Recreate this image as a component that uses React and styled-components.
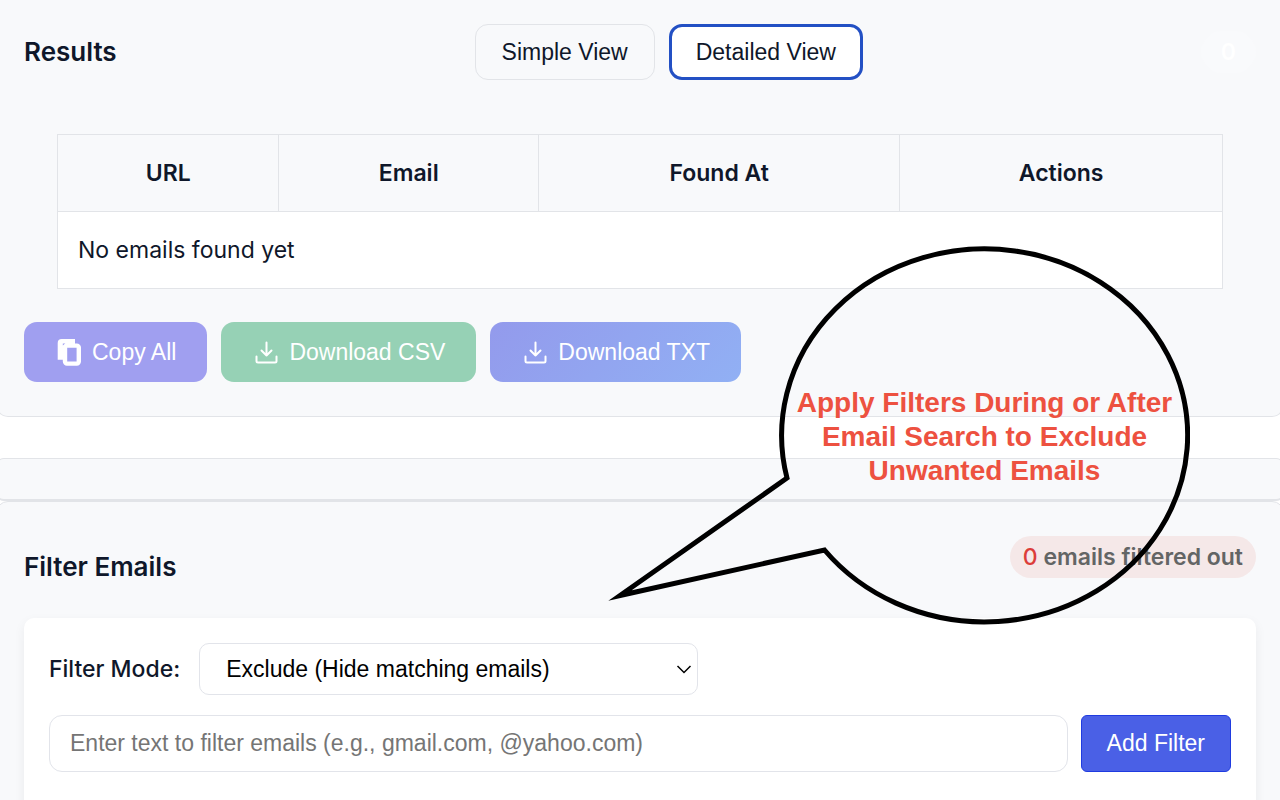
import React, { useState } from "react";
import styled, { createGlobalStyle, css } from "styled-components";

const GlobalStyle = createGlobalStyle`
  *, *::before, *::after { box-sizing: border-box; }
  body {
    margin: 0;
    background: #ffffff;
    color: #0f172a;
    font-family: Inter, sans-serif;
    font-size: 23px;
    line-height: 36px;
  }
  button, input, select { font-family: "Liberation Sans", sans-serif; font-size: 23px; }
`;

const Page = styled.main`
  position: relative;
  overflow-x: clip;
`;

const Panel = styled.section`
  margin: 0 -4px;
  padding: 0 27px;
  background: #f8f9fb;
  border: 1px solid #e2e4e8;
  border-radius: 12px;
`;

const ResultsPanel = styled(Panel)`
  padding-top: 24px;
  padding-bottom: 34px;
  border-top: 0;
  border-top-left-radius: 0;
  border-top-right-radius: 0;
`;

const EmptyPanel = styled(Panel)`
  height: 43px;
  margin-top: 41px;
  border-bottom-width: 2px;
  border-radius: 8px;
`;

const FilterPanel = styled(Panel)`
  padding-top: 34px;
  padding-bottom: 24px;
`;

const PanelHeader = styled.header`
  display: flex;
  justify-content: space-between;
  align-items: ${(p) => p.$align || "center"};
`;

const Title = styled.h2`
  margin: 0;
  font-size: 26px;
  font-weight: 600;
  line-height: 40px;
`;

const FilterTitle = styled(Title)`
  padding-top: 11px;
`;

const ViewSwitch = styled.div`
  display: flex;
  gap: 14px;
  padding-left: 20px;
`;

const ViewButton = styled.button`
  height: 56px;
  padding: 0 26px;
  border-radius: 13px;
  color: #0f172a;
  background: transparent;
  border: 1px solid #e2e4e8;
  ${(p) =>
    p.$active &&
    css`
      padding: 0 24px;
      background: #ffffff;
      border: 3px solid #2350c4;
    `}
`;

const CountBadge = styled.span`
  padding: 3px 20px;
  border-radius: 21px;
  background: #f9fafc;
  color: #ffffff;
  font-weight: 600;
`;

const TableWrap = styled.div`
  padding: 54px 33px 33px;
`;

const Table = styled.table`
  width: 100%;
  table-layout: fixed;
  border-collapse: collapse;
  background: #ffffff;

  th, td {
    height: 77px;
    padding: 0 20px;
    border: 1px solid #e2e4e8;
  }
  th {
    background: #f8f9fb;
    font-weight: 600;
    text-align: center;
  }
  td { text-align: left; }
`;

const Col = styled.col`
  width: ${(p) => p.$share}%;
`;

const ActionRow = styled.div`
  display: flex;
  gap: 14px;
`;

const ActionButton = styled.button`
  display: flex;
  align-items: center;
  gap: 10px;
  height: 60px;
  padding: 0 31px 0 32px;
  border: 0;
  border-radius: 13px;
  color: #ffffff;
  background: ${(p) => p.$fill};

  svg { display: block; }
`;

const FilteredBadge = styled.span`
  padding: 3px 13px;
  border-radius: 21px;
  background: #f5e8e8;
  color: #636565;
  font-weight: 600;

  strong { color: #dc3d3a; font-weight: 500; }
`;

const FilterCard = styled.form`
  margin-top: 31px;
  padding: 25px;
  background: #ffffff;
  border-radius: 10px;
  box-shadow: 0 4px 12px rgba(15, 23, 42, 0.06);
`;

const FieldRow = styled.div`
  display: flex;
  align-items: center;
  gap: ${(p) => p.$gap}px;
  margin-bottom: 20px;
`;

const Label = styled.label`
  font-weight: 500;
`;

const SelectBox = styled.div`
  position: relative;
  width: 499px;

  svg {
    position: absolute;
    right: 6px;
    top: 22px;
    pointer-events: none;
  }
`;

const Select = styled.select`
  display: block;
  appearance: none;
  width: 100%;
  height: 52px;
  padding: 0 26px;
  color: #000000;
  background: #ffffff;
  border: 1px solid #e2e4ea;
  border-radius: 10px;
`;

const TextInput = styled.input`
  flex: 1;
  min-width: 0;
  height: 57px;
  padding: 0 20px;
  background: #ffffff;
  border: 1px solid #e2e4ea;
  border-radius: 13px;

  &::placeholder { color: #757575; opacity: 1; }
`;

const AddButton = styled.button`
  height: 57px;
  padding: 0 25px;
  color: #ffffff;
  background: #4a60e6;
  border: 1px solid #1f3be0;
  border-radius: 6px;
`;

const Callout = styled.aside`
  position: absolute;
  top: 246px;
  right: 90px;
  width: 582px;
  height: 379px;
  pointer-events: none;

  svg { position: absolute; inset: 0; }
`;

const CalloutText = styled.p`
  position: absolute;
  top: 140px;
  right: 0;
  width: 411px;
  margin: 0;
  text-align: center;
  color: #ed5140;
  font: 700 28px/34px "Liberation Sans", sans-serif;
`;

const CopyIcon = () => (
  <svg width="26" height="28" viewBox="0 0 26 28" fill="none" aria-hidden="true">
    <path d="M7 21.700H1.700V5a4 4 0 0 1 4-4H19v5H9.500L7 8.500z" fill="#fff" />
    <path d="M6.800 7.600V5.400h2.600z" fill="#a09ff0" />
    <rect x="9" y="7.600" width="13.800" height="18" rx="2" stroke="#fff" strokeWidth="4.400" />
  </svg>
);

const DownloadIcon = () => (
  <svg width="26" height="26" viewBox="-1 0 26 26" fill="none" stroke="#fff" strokeWidth="2" strokeLinecap="round" strokeLinejoin="round" aria-hidden="true">
    <path d="M12.500 3.500v13M7.500 11.500l5 5 5-5" />
    <path d="M2.500 17.500v4.500a1.500 1.500 0 0 0 1.500 1.500h17a1.500 1.500 0 0 0 1.500-1.500v-4.500" />
  </svg>
);

const Chevron = () => (
  <svg width="16" height="10" viewBox="0 0 16 10" fill="none" stroke="#000" strokeWidth="1.500" aria-hidden="true">
    <path d="M1.500 1 8 7.500 14.500 1" />
  </svg>
);

const columns = [
  { name: "URL", share: 19 },
  { name: "Email", share: 22.3 },
  { name: "Found At", share: 31 },
  { name: "Actions", share: 27.7 },
];

const views = ["Simple View", "Detailed View"];

export default function App() {
  const [view, setView] = useState("Detailed View");
  const [text, setText] = useState("");

  return (
    <Page>
      <GlobalStyle />
      <ResultsPanel>
        <PanelHeader>
          <Title>Results</Title>
          <ViewSwitch>
            {views.map((name) => (
              <ViewButton key={name} type="button" $active={view === name} onClick={() => setView(name)}>
                {name}
              </ViewButton>
            ))}
          </ViewSwitch>
          <CountBadge>0</CountBadge>
        </PanelHeader>
        <TableWrap>
          <Table>
            <colgroup>
              {columns.map((c) => <Col key={c.name} $share={c.share} />)}
            </colgroup>
            <thead>
              <tr>{columns.map((c) => <th key={c.name} scope="col">{c.name}</th>)}</tr>
            </thead>
            <tbody>
              <tr><td colSpan={4}>No emails found yet</td></tr>
            </tbody>
          </Table>
        </TableWrap>
        <ActionRow>
          <ActionButton type="button" $fill="#a09ff0"><CopyIcon />Copy All</ActionButton>
          <ActionButton type="button" $fill="#96d1b5"><DownloadIcon />Download CSV</ActionButton>
          <ActionButton type="button" $fill="linear-gradient(135deg, #939aec, #91b0f4)"><DownloadIcon />Download TXT</ActionButton>
        </ActionRow>
      </ResultsPanel>
      <EmptyPanel />
      <FilterPanel>
        <PanelHeader $align="flex-start">
          <FilterTitle>Filter Emails</FilterTitle>
          <FilteredBadge><strong>0</strong> emails filtered out</FilteredBadge>
        </PanelHeader>
        <FilterCard onSubmit={(e) => e.preventDefault()}>
          <FieldRow $gap={19}>
            <Label htmlFor="mode">Filter Mode:</Label>
            <SelectBox>
              <Select id="mode" defaultValue="exclude">
                <option value="exclude">Exclude (Hide matching emails)</option>
                <option value="include">Include (Show matching emails)</option>
              </Select>
              <Chevron />
            </SelectBox>
          </FieldRow>
          <FieldRow $gap={13}>
            <TextInput
              aria-label="Filter text"
              placeholder="Enter text to filter emails (e.g., gmail.com, @yahoo.com)"
              value={text}
              onChange={(e) => setText(e.target.value)}
            />
            <AddButton type="submit">Add Filter</AddButton>
          </FieldRow>
        </FilterCard>
      </FilterPanel>
      <Callout>
        <svg width="582" height="379" viewBox="608 246 582 379" fill="none" aria-hidden="true">
          <path d="M787 478A203 186.500 0 1 1 824.500 550L620 595.500Z" stroke="#000" strokeWidth="5" strokeMiterlimit="10" />
        </svg>
        <CalloutText>Apply Filters During or After Email Search to Exclude Unwanted Emails</CalloutText>
      </Callout>
    </Page>
  );
}
